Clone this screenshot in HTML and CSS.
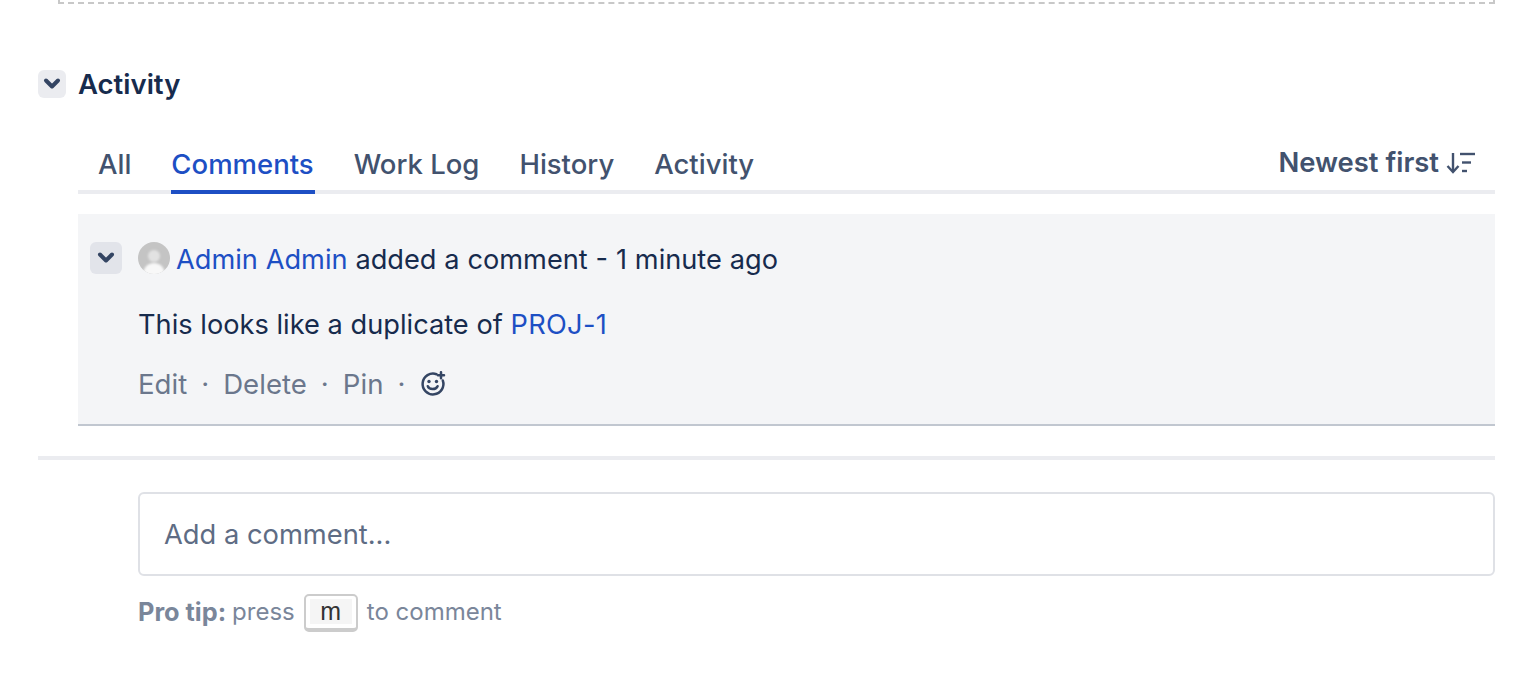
FILE: index.html

```html
<!DOCTYPE html>
<html lang="en">
<head>
<meta charset="UTF-8" />
<title>Activity</title>
<link rel="stylesheet" href="styles.css">
</head>
<body>
<div class="dropzone"></div>

<div class="module-head">
  <button class="toggle">
    <svg width="20" height="14" viewBox="0 0 20 14"><path d="M4 3.5 L10 9.5 L16 3.5" fill="none" stroke="#344563" stroke-width="4" stroke-linecap="round" stroke-linejoin="round"/></svg>
  </button>
  <h2>Activity</h2>
</div>

<div class="module-body">
  <div class="tabs">
    <a class="tab">All</a>
    <a class="tab active">Comments</a>
    <a class="tab">Work Log</a>
    <a class="tab">History</a>
    <a class="tab">Activity</a>
    <div class="sort">Newest first
      <svg width="29" height="22" viewBox="0 0 29 22"><g fill="none" stroke="#42526e" stroke-width="2.4"><path d="M7 1 V19.5"/><path d="M1.5 14 L7 20 L12.5 14"/><path d="M14 2 H29"/><path d="M16 10.5 H25"/><path d="M16 19 H21"/></g></svg>
    </div>
  </div>

  <div class="comment">
    <div class="comment-head">
      <button class="toggle toggle-small">
        <svg width="20" height="14" viewBox="0 0 20 14"><path d="M4 3.5 L10 9.5 L16 3.5" fill="none" stroke="#344563" stroke-width="4" stroke-linecap="round" stroke-linejoin="round"/></svg>
      </button>
      <svg class="avatar" width="32" height="32" viewBox="0 0 32 32">
        <defs>
          <clipPath id="avatar-clip"><circle cx="16" cy="16" r="16"/></clipPath>
          <filter id="avatar-blur"><feGaussianBlur stdDeviation="1"/></filter>
        </defs>
        <g clip-path="url(#avatar-clip)">
          <rect width="32" height="32" fill="#c4c4c4"/>
          <g filter="url(#avatar-blur)">
            <circle cx="16" cy="14" r="6" fill="#e2e2e2"/>
            <path d="M5 34 C5 24 11 21 16 21 C21 21 27 24 27 34 Z" fill="#f8f8f8"/>
          </g>
        </g>
      </svg>
      <span class="byline"><a>Admin Admin</a> added a comment - 1 minute ago</span>
    </div>
    <p class="comment-text">This looks like a duplicate of <a>PROJ-1</a></p>
    <div class="comment-actions">
      <span>Edit</span><i>·</i><span>Delete</span><i>·</i><span>Pin</span><i>·</i>
      <svg width="26" height="26" viewBox="0 0 26 26"><g fill="none" stroke="#344563" stroke-width="2.5" stroke-linecap="round"><path d="M16.5 3.2 A10.4 10.4 0 1 0 22.8 9.5"/><path d="M7.8 15.2 C9 19 16 19 17.6 15.2"/><path d="M21 1.2 V7.2 M18 4.2 H24"/></g><circle cx="9" cy="10.5" r="1.7" fill="#344563"/><circle cx="16.5" cy="10.5" r="1.7" fill="#344563"/></svg>
    </div>
  </div>
</div>

<div class="divider"></div>

<div class="add-comment">
  <div class="comment-box">Add a comment...</div>
  <div class="tip"><b>Pro tip:</b> <span>press</span> <kbd>m</kbd> <span>to comment</span></div>
</div>
</body>
</html>
```

FILE: styles.css

```css
* {
  box-sizing: border-box;
}
body {
  margin: 0;
  height: 684px;
  overflow: hidden;
  background-color: #ffffff;
  font-family: Inter, "Liberation Sans", sans-serif;
  color: #172b4d;
  padding: 0 35px 0 38px;
}
a {
  color: #1d4fc4;
}
.dropzone {
  height: 4px;
  margin-left: 20px;
  border: 2px dashed #c8c8c8;
  border-top: 0;
}
.module-head {
  display: flex;
  align-items: center;
  gap: 12px;
  margin-top: 66px;
  height: 28px;
}
.module-head h2 {
  margin: 0;
  font-size: 27.5px;
  font-weight: 600;
  line-height: 28px;
}
.toggle {
  display: flex;
  align-items: center;
  justify-content: center;
  width: 28px;
  height: 28px;
  padding: 0;
  border: 0;
  border-radius: 6px;
  background-color: #ebecf0;
}
.toggle-small {
  width: 32px;
  height: 32px;
  background-color: #e2e4ea;
}
.module-body {
  margin-left: 40px;
}
.tabs {
  display: flex;
  align-items: flex-end;
  gap: 40px;
  box-sizing: content-box;
  height: 46px;
  margin-top: 46px;
  padding-left: 20px;
  border-bottom: 4px solid #ebecf0;
}
.tab {
  height: 50px;
  margin-bottom: -4px;
  font-size: 27.5px;
  line-height: 40px;
  font-weight: 500;
  color: #42526e;
}
.tab.active {
  margin: 0 -1px -4px 0;
  padding-right: 1px;
  color: #1d4fc4;
  border-bottom: 4px solid #1d4fc4;
}
.sort {
  display: flex;
  align-items: center;
  gap: 7px;
  margin-left: auto;
  padding-right: 20px;
  padding-bottom: 10px;
  height: 46px;
  font-size: 27.4px;
  font-weight: 600;
  color: #42526e;
}
.sort svg {
  margin-top: 2px;
}
.comment {
  height: 212px;
  margin-top: 20px;
  padding: 28px 0 0 12px;
  background-color: #f4f5f7;
  border-bottom: 2px solid #c1c7d0;
}
.comment-head {
  display: flex;
  align-items: center;
  height: 32px;
  font-size: 27.2px;
}
.byline {
  padding-top: 2px;
  word-spacing: 0.2px;
}
.avatar {
  margin-left: 16px;
  margin-right: 6px;
}
.comment-text {
  margin: 0;
  padding-left: 48px;
  padding-top: 33px;
  font-size: 27.2px;
  line-height: 36px;
  word-spacing: 0.1px;
}
.comment-text a {
  letter-spacing: 0.3px;
}
.comment-actions {
  display: flex;
  align-items: center;
  margin-top: 23px;
  padding-left: 48px;
  height: 36px;
  font-size: 27.6px;
  color: #6b778c;
}
.comment-actions i {
  width: 36px;
  text-align: center;
  font-style: normal;
  color: #6b778c;
}
.comment-actions svg {
  margin-left: 1px;
}
.divider {
  height: 4px;
  margin-top: 30px;
  background-color: #ebecf0;
}
.add-comment {
  margin-left: 100px;
  margin-top: 32px;
}
.comment-box {
  height: 84px;
  padding-left: 24px;
  border: 2px solid #dfe1e6;
  border-radius: 6px;
  font-size: 27.3px;
  line-height: 82px;
  color: #5e6c84;
}
.tip {
  display: flex;
  align-items: flex-start;
  margin-top: 18px;
  height: 38px;
  font-size: 24px;
  line-height: 36px;
  color: #7a869a;
}
.tip b {
  margin-right: 6px;
  font-size: 25.3px;
  font-weight: 700;
}
kbd {
  display: block;
  width: 54px;
  height: 38px;
  margin: 0 9px;
  padding: 3px 4px 4px;
  border: 2px solid #cccccc;
  border-bottom-width: 4px;
  border-radius: 5px;
  background-color: #f5f5f5;
  background-clip: content-box;
  font-family: "Liberation Sans", sans-serif;
  font-size: 25px;
  line-height: 25px;
  text-align: center;
  color: #333333;
}
```
